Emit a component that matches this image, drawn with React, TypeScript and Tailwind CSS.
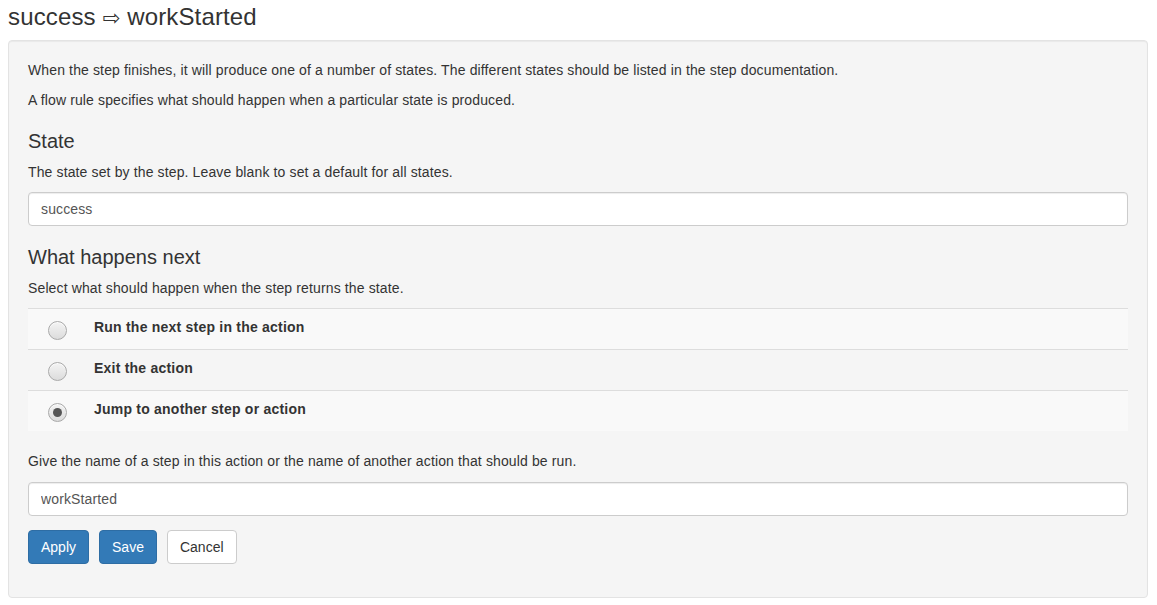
import React, { useState } from 'react';

const font = { fontFamily: '"Liberation Sans", Arial, Helvetica, sans-serif' };

const choices = [
    { id: 'next', label: 'Run the next step in the action' },
    { id: 'exit', label: 'Exit the action' },
    { id: 'jump', label: 'Jump to another step or action' },
];

function Radio({ checked, onClick }: { checked: boolean; onClick: () => void }) {
    return (
        <button
            type="button"
            onClick={onClick}
            className="w-[19px] h-[19px] rounded-full border border-[#a9a9a9] bg-gradient-to-b from-[#f4f4f4] to-[#dcdcdc] flex items-center justify-center shadow-[inset_0_1px_0_rgba(255,255,255,0.8)]"
        >
            {checked && <span className="w-[9px] h-[9px] rounded-full bg-[#555]" />}
        </button>
    );
}

export default function App() {
    const [choice, setChoice] = useState('jump');
    const [state, setState] = useState('success');
    const [target, setTarget] = useState('workStarted');

    return (
        <div className="min-h-[605px] bg-white text-[#333] text-[14px] leading-[20px] tracking-[0.13px]" style={font}>
            <h3 className="pt-1 pl-2 h-10 text-[24px] leading-[26px] font-normal tracking-[0.15px]">
                {state} <span style={{ fontFamily: '"DejaVu Sans", sans-serif' }} className="text-[21px]">⇨</span> {target}
            </h3>

            <div className="ml-2 mr-[9px] h-[558px] rounded border border-[#e3e3e3] bg-[#f5f5f5] shadow-[inset_0_1px_1px_rgba(0,0,0,0.05)] p-[19px]">
                <p className="mb-[10px]">
                    When the step finishes, it will produce one of a number of states. The different states should be listed in the step documentation.
                </p>
                <p className="mb-[10px]">A flow rule specifies what should happen when a particular state is produced.</p>

                <h4 className="mt-5 mb-[10px] text-[20px] leading-[22px] font-normal tracking-normal">State</h4>
                <p className="mb-[10px]">The state set by the step. Leave blank to set a default for all states.</p>
                <input
                    value={state}
                    onChange={(e) => setState(e.target.value)}
                    className="block w-full h-[34px] px-3 rounded border border-[#ccc] bg-white text-[#555] shadow-[inset_0_1px_1px_rgba(0,0,0,0.075)] outline-none"
                />

                <h4 className="mt-5 mb-[10px] text-[20px] leading-[22px] font-normal tracking-normal">What happens next</h4>
                <p className="mb-[10px]">Select what should happen when the step returns the state.</p>

                <div className="mb-5">
                    {choices.map((c, i) => (
                        <div
                            key={c.id}
                            className={`flex h-[41px] border-t border-[#ddd] ${i % 2 === 0 ? 'bg-[#f9f9f9]' : ''}`}
                        >
                            <div className="w-[58px] flex justify-center pt-[12px]">
                                <Radio checked={choice === c.id} onClick={() => setChoice(c.id)} />
                            </div>
                            <div className="pl-2 pt-2 font-bold tracking-[0.22px]">{c.label}</div>
                        </div>
                    ))}
                </div>

                <p className="mb-[11px]">Give the name of a step in this action or the name of another action that should be run.</p>
                <input
                    value={target}
                    onChange={(e) => setTarget(e.target.value)}
                    className="block w-full h-[34px] px-3 rounded border border-[#ccc] bg-white text-[#555] shadow-[inset_0_1px_1px_rgba(0,0,0,0.075)] outline-none"
                />

                <div className="mt-[14px] flex gap-[10px] tracking-normal">
                    <button className="h-[34px] px-3 rounded border border-[#2e6da4] bg-[#337ab7] text-white">Apply</button>
                    <button className="h-[34px] px-3 rounded border border-[#2e6da4] bg-[#337ab7] text-white">Save</button>
                    <button className="h-[34px] px-3 rounded border border-[#ccc] bg-white text-[#333]">Cancel</button>
                </div>
            </div>
        </div>
    );
}
